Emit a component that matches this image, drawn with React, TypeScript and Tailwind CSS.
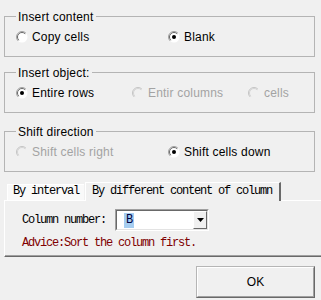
import React from 'react'

function Radio({ checked, disabled }: { checked?: boolean; disabled?: boolean }) {
  const outer = disabled ? '#c4c4c4' : '#a0a0a0'
  const inner = disabled ? '#d4d4d4' : '#696969'
  return (
    <svg width="12" height="12" viewBox="0 0 12 12" className="shrink-0">
      <circle cx="6" cy="6" r="5.5" fill={disabled ? '#f0f0f0' : '#ffffff'} />
      <path d="M9.9 2.1 A5.5 5.5 0 0 0 2.1 9.9" stroke={outer} fill="none" />
      <path d="M9.2 2.8 A4.5 4.5 0 0 0 2.8 9.2" stroke={inner} fill="none" />
      {checked && <circle cx="6" cy="6" r="2" fill="#000000" />}
    </svg>
  )
}

function Option({
  label,
  checked,
  disabled,
  width,
}: {
  label: string
  checked?: boolean
  disabled?: boolean
  width?: string
}) {
  return (
    <label className={`flex items-center gap-[4px] ${width ?? ''} ${disabled ? 'text-[#a3a3a3]' : 'text-black'}`}>
      <Radio checked={checked} disabled={disabled} />
      <span className="leading-[16px] tracking-[0.2px]">{label}</span>
    </label>
  )
}

function Group({ title, className, children }: { title: string; className?: string; children: React.ReactNode }) {
  return (
    <fieldset className={`w-[311px] border border-[#b4b4b4] pl-[11px] pt-[6px] pb-[11px] ${className ?? ''}`}>
      <legend className="relative top-[1px] px-[2px] leading-[14px] tracking-[0.2px]">{title}</legend>
      <div className="flex h-[16px] items-center">{children}</div>
    </fieldset>
  )
}

export default function App() {
  return (
    <div className="h-[300px] w-[321px] overflow-hidden bg-[#f0f0f0] pl-[4px] pt-[9px] font-['Liberation_Sans',Arial,sans-serif] text-[12px] text-black">
      {/* Insert content */}
      <Group title="Insert content">
        <Option label="Copy cells" width="w-[152px]" />
        <Option label="Blank" checked />
      </Group>

      {/* Insert object */}
      <Group title="Insert object:" className="mt-[8px]">
        <Option label="Entire rows" checked width="w-[116px]" />
        <Option label="Entir columns" disabled width="w-[116px]" />
        <Option label="cells" disabled />
      </Group>

      {/* Shift direction */}
      <Group title="Shift direction" className="mt-[11px]">
        <Option label="Shift cells right" disabled width="w-[152px]" />
        <Option label="Shift cells down" checked />
      </Group>

      {/* Tabs */}
      <div className="mt-[10px] flex h-[18px] items-end pl-[3px] font-['Liberation_Mono',monospace] text-[12px] tracking-[-1.2px]">
        <div className="h-[16px] w-[77px] border-l border-t border-white bg-[#f9f9f9] pl-[5px] leading-[13px]">
          By interval
        </div>
        <div className="relative z-10 -mb-px ml-[1px] h-[19px] w-[196px] border-l border-t border-r-2 border-l-white border-t-white border-r-[#696969] bg-[#f0f0f0] pl-[6px] pt-[1px] leading-[15px]">
          By different content of column
        </div>
      </div>

      {/* Tab panel */}
      <div className="w-[330px] border-l border-t border-b border-l-white border-t-white border-b-[#696969] pb-[7px] pl-[17px] pt-[8px] font-['Liberation_Mono',monospace] text-[12px] tracking-[-1.2px] shadow-[inset_0_-1px_0_#a0a0a0]">
        <div className="flex h-[22px] items-center">
          <span className="w-[93px] shrink-0">Column number:</span>
          <div className="h-[22px] w-[94px] border border-b-white border-l-[#a0a0a0] border-r-white border-t-[#a0a0a0]">
            <div className="flex h-full border border-b-[#e3e3e3] border-l-[#696969] border-r-[#e3e3e3] border-t-[#696969] bg-white">
              <div className="flex flex-1 items-center pl-[7px]">
                <span className="bg-[#a6cdf0] px-[2px] leading-[15px] text-[#000040]">B</span>
              </div>
              <div className="flex w-[14px] items-center justify-center border border-b-[#696969] border-l-white border-r-[#696969] border-t-white bg-[#f0f0f0]">
                <svg width="7" height="4" viewBox="0 0 7 4">
                  <path d="M0 0 H7 L3.5 4 Z" fill="#000000" />
                </svg>
              </div>
            </div>
          </div>
        </div>
        <div className="mt-[6px] leading-[12px] text-[#800000]">Advice:Sort the column first.</div>
      </div>

      {/* OK */}
      <div className="mt-[9px] flex justify-end pr-[6px]">
        <button className="h-[32px] w-[119px] border border-b-[#696969] border-l-[#b5b5b5] border-r-[#696969] border-t-[#b5b5b5] bg-[#f0f0f0]">
          <div className="flex h-full items-center justify-center border border-b-[#a0a0a0] border-l-white border-r-[#a0a0a0] border-t-white text-[12px]">
            OK
          </div>
        </button>
      </div>
    </div>
  )
}
